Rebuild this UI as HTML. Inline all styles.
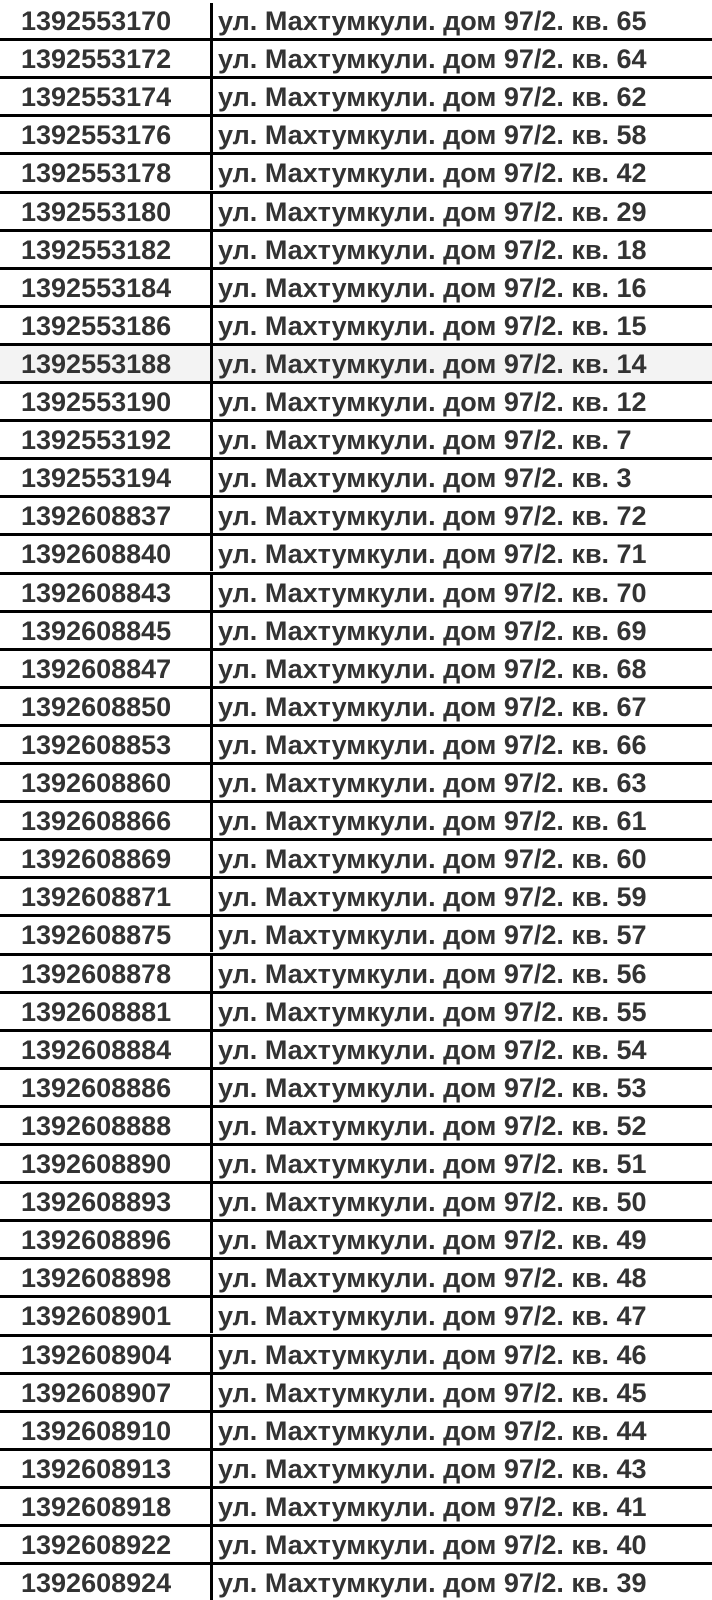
<!DOCTYPE html>
<html><head><meta charset="utf-8"><style>
body{margin:0;width:712px;height:1600px;overflow:hidden;background:#fff;font-family:"Liberation Sans",Arial,sans-serif;font-weight:bold;font-size:27px;color:#333}
.r{position:absolute;left:0;width:712px;height:38.1px;box-sizing:border-box;border-top:3px solid #000}
.r.f{border-top-color:transparent}
.r.h{background:#f3f3f3}
.a{position:absolute;left:21px;top:2px;line-height:32px}
.b{position:absolute;left:210px;top:0;bottom:0;border-left:3px solid #000;padding-left:5px;line-height:32px;padding-top:2px}
</style></head><body>
<div id="t"></div>
<script>
var ids=["1392553170","1392553172","1392553174","1392553176","1392553178","1392553180","1392553182","1392553184","1392553186","1392553188","1392553190","1392553192","1392553194","1392608837","1392608840","1392608843","1392608845","1392608847","1392608850","1392608853","1392608860","1392608866","1392608869","1392608871","1392608875","1392608878","1392608881","1392608884","1392608886","1392608888","1392608890","1392608893","1392608896","1392608898","1392608901","1392608904","1392608907","1392608910","1392608913","1392608918","1392608922","1392608924"];
var kv=[65,64,62,58,42,29,18,16,15,14,12,7,3,72,71,70,69,68,67,66,63,61,60,59,57,56,55,54,53,52,51,50,49,48,47,46,45,44,43,41,40,39];
var h="";
for(var i=0;i<ids.length;i++){h+='<div class="r'+(i==0?' f':'')+(i==9?' h':'')+'" style="top:'+(38.1*i)+'px"><span class="a">'+ids[i]+'</span><span class="b">ул. Махтумкули. дом 97/2. кв. '+kv[i]+'</span></div>';}
document.getElementById("t").innerHTML=h;
</script>
</body></html>
